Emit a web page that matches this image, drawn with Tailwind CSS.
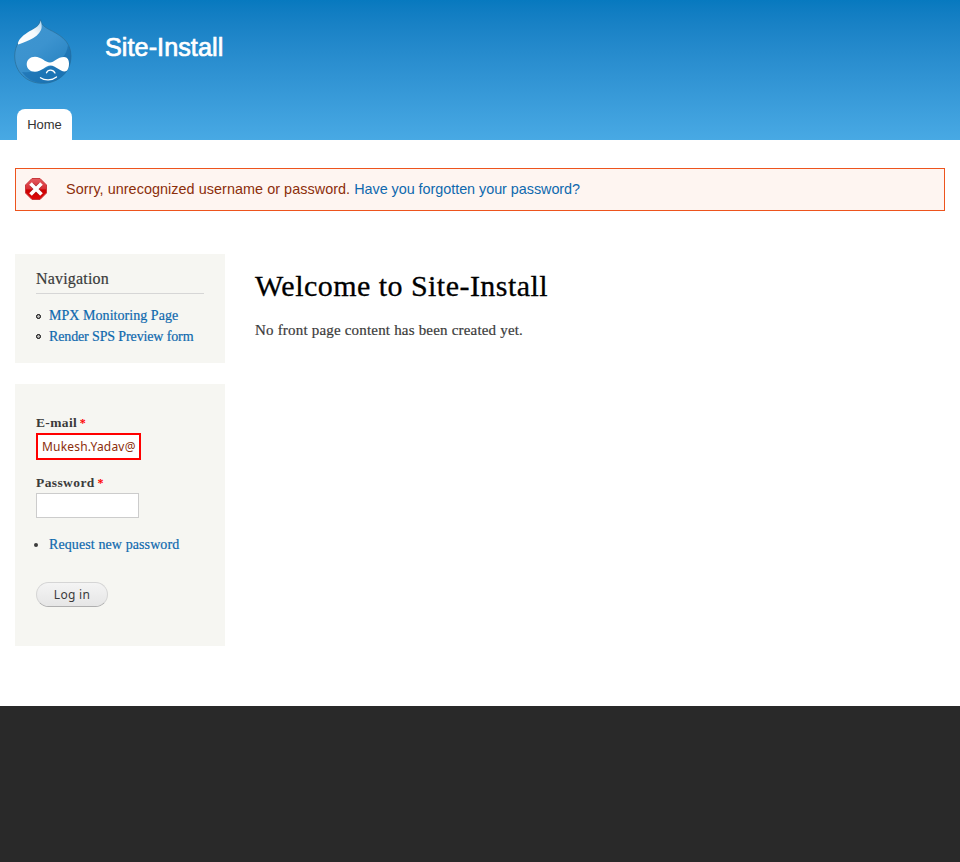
<!DOCTYPE html>
<html lang="en">
<head>
<meta charset="utf-8">
<title>Welcome to Site-Install</title>
<script src="https://cdn.jsdelivr.net/npm/@tailwindcss/browser@4"></script>
</head>
<body class="bg-[#292929] font-['Liberation_Serif',serif] text-[#3b3b3b]">
<header class="flex h-[140px] flex-col justify-between bg-linear-to-b from-[#0779bf] to-[#48a9e4] font-['Liberation_Sans',sans-serif]">
  <div class="flex pl-[13px] pt-[19px]">
    <svg class="h-[66px] w-[60px]" viewBox="0 0 60 66">
      <defs>
        <linearGradient id="drop" x1="0" y1="0" x2=".7" y2="1"><stop offset="0" stop-color="#3f96d0"/><stop offset=".5" stop-color="#3c93cf"/><stop offset="1" stop-color="#2480bf"/></linearGradient>
        <linearGradient id="shine" x1="1" y1="0" x2="0" y2="1"><stop offset="0" stop-color="#fff" stop-opacity=".6"/><stop offset=".4" stop-color="#fff" stop-opacity=".95"/><stop offset="1" stop-color="#fff"/></linearGradient>
      </defs>
      <path d="M27.500.8c.8 4.500 3.500 7 8.200 9.500C45 15 58 21 58 37c0 16-12.500 27.300-28.500 27.300S1.700 53 1.700 37c0-11 6-18 13-23 6-4.500 11.300-6 12.800-13.200Z" fill="url(#drop)" stroke="#2b7099" stroke-opacity=".75"/>
      <path d="M55 26c-1 10-8 17-17 21-10 5-20 7-29 6 5 7 12 11 21 11 16 0 28-11 28-27 0-4-1-8-3-11Z" fill="#1268aa" opacity=".55"/>
      <path d="M27.700 1.500c1 4 1.500 7 .3 9.500-2 4.500-6 7.500-11.500 10-5 2-8.500 4-11.500 4.500-.7-3.500 4-8.500 9.500-12 5-3.500 12-5 13.200-12Z" fill="url(#shine)"/>
      <path d="M22 37.800c6.500 0 10 5.700 15 5.700 4 0 7.500-5.500 14-5.500 3.500 0 5 3 5 6.500 0 4.500-1.500 8-4.500 8-4.500 0-9-6-14-6-5 0-9 6.300-15.500 6.300-5 0-8.300-3.300-8.300-7.500s3.300-7.500 8.300-7.500Z" fill="#fff"/>
      <path d="M33.500 53.800c1.500-3.500 6.500-3.500 8.500.2M27.500 58.700c4 3 11.500 3 16-.7" fill="none" stroke="#fff" stroke-width="1.300" stroke-linecap="round"/>
    </svg>
    <div class="ml-[32px] mt-[13px] text-[25.200px] leading-[30px] tracking-[0.060px] text-white [-webkit-text-stroke:0.7px_white]">Site-Install</div>
  </div>
  <nav class="flex pl-[17px]"><a class="h-[31px] w-[55px] rounded-t-[8px] bg-white text-center text-[13px] leading-[31px] text-[#333]">Home</a></nav>
</header>
<main class="h-[566px] bg-white px-[15px] pt-[28px]">
  <div class="flex h-[43px] items-center border border-[#ed541d] bg-[#fef5f1] pl-[9px] font-['Liberation_Sans',sans-serif] text-[14.400px] text-[#8c2e0b]">
    <svg class="mb-[2px] h-[22px] w-[22px]" viewBox="0 0 22 22">
      <defs><linearGradient id="stop" x1="0" y1="0" x2="0" y2="1"><stop stop-color="#e35b60"/><stop offset=".48" stop-color="#d82f36"/><stop offset=".55" stop-color="#cc0000"/><stop offset="1" stop-color="#df0b0b"/></linearGradient></defs>
      <path d="M7 .5h8L21.500 7v8L15 21.500H7L.5 15V7Z" fill="url(#stop)" stroke="#c8383c"/>
      <path d="m6.500 6.500 9 9m0-9-9 9" stroke="#7d2020" stroke-opacity=".5" stroke-width="5"/>
      <path d="m5.500 5.500 11 11m0-11-11 11" stroke="#fff" stroke-width="3.700"/>
    </svg>
    <p class="ml-[19px] tracking-[0.050px] whitespace-nowrap">Sorry, unrecognized username or password. <a class="tracking-[-0.040px] text-[#0f69ae]">Have you forgotten your password?</a></p>
  </div>
  <div class="mt-[43px] flex gap-[30px]">
    <aside class="flex w-[210px] shrink-0 flex-col gap-[21px]">
      <section class="h-[109px] bg-[#f6f6f2] px-[21px] pt-[14px]">
        <h2 class="h-[26px] border-b border-[#d6d6d6] text-[16px] leading-[22px] tracking-[0.180px] [-webkit-text-stroke:0.2px]">Navigation</h2>
        <ul class="mt-[11px] text-[14px] leading-[21px] text-[#0f69ae] [-webkit-text-stroke:0.2px]">
          <li class="flex items-center"><span class="mt-[2px] mr-[8px] h-[5px] w-[5px] rounded-full border border-black bg-[#bbb]"></span><a class="tracking-[0.050px]">MPX Monitoring Page</a></li>
          <li class="flex items-center whitespace-nowrap"><span class="mr-[8px] h-[5px] w-[5px] rounded-full border border-black bg-[#bbb]"></span><a class="tracking-[-0.130px]">Render SPS Preview form</a></li>
        </ul>
      </section>
      <form class="h-[262px] bg-[#f6f6f2] px-[21px] pt-[29px]">
        <label class="block h-[20px] text-[13.500px] leading-[20px] font-bold tracking-[0.350px]">E-mail <span class="ml-[-1px] text-[12px] text-[#f00]">*</span></label>
        <div class="h-[27px] w-[105px] border-2 border-[#f00] bg-white pl-[4px] font-['Noto_Sans',sans-serif] text-[12px] leading-[23px] tracking-[0.200px] text-[#8c2e0b]">Mukesh.Yadav@</div>
        <label class="mt-[13px] block h-[20px] text-[13.500px] leading-[20px] font-bold tracking-[0.400px]">Password <span class="ml-[-1px] text-[12px] text-[#f00]">*</span></label>
        <div class="h-[25px] w-[103px] border border-[#ccc] bg-white"></div>
        <div class="mt-[16px] flex h-[21px] items-center text-[14px]"><span class="ml-[-2px] mr-[11px] h-[4px] w-[4px] rounded-full bg-[#3b3b3b]"></span><a class="tracking-[0.100px] text-[#0f69ae] [-webkit-text-stroke:0.2px]">Request new password</a></div>
        <button type="button" class="mt-[27px] block h-[25px] w-[72px] rounded-full border border-[#d5d5d5] border-b-[#afafaf] bg-linear-to-b from-[#f4f4f4] to-[#e6e6e6] font-['Noto_Sans',sans-serif] text-[12px] leading-[23px] tracking-[0.300px] text-[#3a3a3a]">Log in</button>
      </form>
    </aside>
    <article class="pt-[14px]">
      <h1 class="text-[30px] leading-[36px] tracking-[0.460px] text-black [-webkit-text-stroke:0.3px]">Welcome to Site-Install</h1>
      <p class="mt-[15px] text-[15px] leading-[22px] tracking-[0.190px] [-webkit-text-stroke:0.2px]">No front page content has been created yet.</p>
    </article>
  </div>
</main>
</body>
</html>
